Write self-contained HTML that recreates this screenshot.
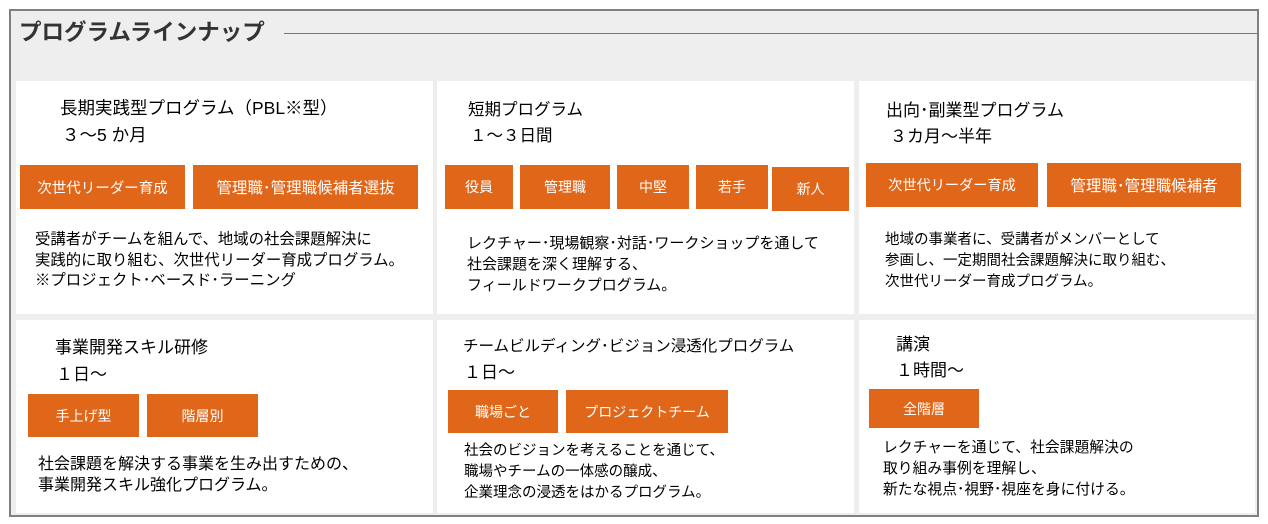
<!DOCTYPE html><html><head><meta charset="utf-8"><style>
body{margin:0;width:1268px;height:524px;background:#fff;position:relative;overflow:hidden;font-family:"Liberation Sans","Noto Sans CJK JP",sans-serif;color:#000}
.frame{position:absolute;left:9px;top:9px;width:1246px;height:504px;border:2px solid #808080;background:#eeeeee}
.c{position:absolute;background:#fff}
.t{position:absolute;white-space:nowrap;font-size:17px;line-height:20px}
.b{position:absolute;background:#e0661a;color:#fff;font-size:14px;display:flex;align-items:center;justify-content:center;white-space:nowrap}
.p{position:absolute;white-space:nowrap;font-size:14.5px;line-height:21px}
</style></head><body>
<div class="frame"></div>
<div class="t" style="left:19px;top:20px;font-weight:bold;font-size:22.5px;line-height:26px;color:#333">プログラムラインナップ</div>
<div style="position:absolute;left:284px;top:33px;width:973px;height:1px;background:#777"></div>
<div class="c" style="left:16px;top:81px;width:417px;height:233px"></div>
<div class="c" style="left:437px;top:81px;width:417px;height:233px"></div>
<div class="c" style="left:859px;top:81px;width:396px;height:233px"></div>
<div class="c" style="left:16px;top:320px;width:417px;height:193px"></div>
<div class="c" style="left:437px;top:320px;width:417px;height:193px"></div>
<div class="c" style="left:859px;top:320px;width:396px;height:193px"></div>

<div class="t" style="left:60px;top:98px;font-size:17.5px">長期実践型プログラム（PBL※型）</div>
<div class="t" style="left:62px;top:125px;font-size:17.5px">３～5 か月</div>
<div class="b" style="left:20px;top:165px;width:165px;height:44px;font-size:14.5px">次世代リーダー育成</div>
<div class="b" style="left:193px;top:165px;width:225px;height:44px;font-size:15.5px">管理職･管理職候補者選抜</div>
<div class="p" style="left:35px;top:230px;font-size:15.4px;line-height:20.5px">受講者がチームを組んで、地域の社会課題解決に<br>実践的に取り組む、次世代リーダー育成プログラム。<br>※プロジェクト･ベースド･ラーニング</div>

<div class="t" style="left:468px;top:100px;font-size:16.5px">短期プログラム</div>
<div class="t" style="left:470px;top:126px;font-size:16.5px">１～３日間</div>
<div class="b" style="left:445px;top:165px;width:68px;height:44px">役員</div>
<div class="b" style="left:520px;top:165px;width:90px;height:44px">管理職</div>
<div class="b" style="left:617px;top:165px;width:72px;height:44px">中堅</div>
<div class="b" style="left:696px;top:165px;width:72px;height:44px">若手</div>
<div class="b" style="left:772px;top:167px;width:77px;height:44px">新人</div>
<div class="p" style="left:467px;top:233px;font-size:15px">レクチャー･現場観察･対話･ワークショップを通して<br>社会課題を深く理解する、<br>フィールドワークプログラム。</div>

<div class="t" style="left:886px;top:101px">出向･副業型プログラム</div>
<div class="t" style="left:890px;top:127px">３カ月～半年</div>
<div class="b" style="left:866px;top:163px;width:172px;height:44px;font-size:14.2px">次世代リーダー育成</div>
<div class="b" style="left:1047px;top:163px;width:194px;height:44px;font-size:15.5px">管理職･管理職候補者</div>
<div class="p" style="left:885px;top:230px">地域の事業者に、受講者がメンバーとして<br>参画し、一定期間社会課題解決に取り組む、<br>次世代リーダー育成プログラム。</div>

<div class="t" style="left:55px;top:338px">事業開発スキル研修</div>
<div class="t" style="left:56px;top:365px">１日～</div>
<div class="b" style="left:28px;top:394px;width:111px;height:43px">手上げ型</div>
<div class="b" style="left:147px;top:394px;width:111px;height:43px">階層別</div>
<div class="p" style="left:38px;top:454px;font-size:16px">社会課題を解決する事業を生み出すための、<br>事業開発スキル強化プログラム。</div>

<div class="t" style="left:463px;top:337px;font-size:15.5px">チームビルディング･ビジョン浸透化プログラム</div>
<div class="t" style="left:464px;top:363px">１日～</div>
<div class="b" style="left:448px;top:390px;width:110px;height:43px">職場ごと</div>
<div class="b" style="left:566px;top:390px;width:162px;height:43px">プロジェクトチーム</div>
<div class="p" style="left:464px;top:441px">社会のビジョンを考えることを通じて、<br>職場やチームの一体感の醸成、<br>企業理念の浸透をはかるプログラム。</div>

<div class="t" style="left:896px;top:335px">講演</div>
<div class="t" style="left:896px;top:361px">１時間～</div>
<div class="b" style="left:869px;top:389px;width:110px;height:39px">全階層</div>
<div class="p" style="left:883px;top:438px;font-size:14.8px">レクチャーを通じて、社会課題解決の<br>取り組み事例を理解し、<br>新たな視点･視野･視座を身に付ける。</div>
</body></html>
